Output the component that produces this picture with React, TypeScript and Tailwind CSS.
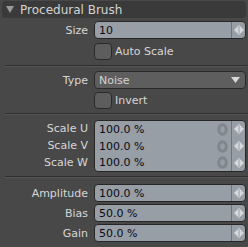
import React from 'react';

const Arrows = () => (
    <svg width="12" height="10" viewBox="0 0 12 10" className="block">
        <path d="M5 1L1 5L5 9Z" fill="#d6d9dc" />
        <rect x="5.5" y="0" width="1" height="10" fill="#d6d9dc" />
        <path d="M7 1L11 5L7 9Z" fill="#d6d9dc" />
    </svg>
);

const Ghost = () => (
    <svg width="11" height="13" viewBox="0 0 11 13" className="block">
        <ellipse cx="5.5" cy="6.5" rx="3.7" ry="4.8" fill="none" stroke="#80868c" strokeWidth="3" />
    </svg>
);

function Label({ text }: { text: string }) {
    return <div className="w-[89px] shrink-0 text-right pr-[1px] text-[#d7d7d7]">{text}</div>;
}

function NumField({ value }: { value: string }) {
    return (
        <div className="ml-[5px] w-[152px] h-[18px] flex items-stretch rounded-[4px] border border-[#262626] bg-[#979ea5]">
            <div className="flex-1 flex items-center pl-[4px] text-[#0b0b14]">{value}</div>
            <div className="w-[14px] flex items-center justify-center border-l border-[#6f757b]">
                <Arrows />
            </div>
        </div>
    );
}

function Check({ text }: { text: string }) {
    return (
        <div className="flex items-center">
            <div className="w-[89px] shrink-0" />
            <div className="ml-[5px] w-[18px] h-[17px] rounded-[4px] border border-[#2a2a2a] bg-[#5d5d5d]" />
            <span className="ml-[3px] text-[#d7d7d7]">{text}</span>
        </div>
    );
}

const Sep = () => <div className="ml-[5px] h-[2px] border-t border-[#2f2f2f] border-b-[#555555] border-b" />;

export default function App() {
    return (
        <div className="w-[248px] h-[247px] overflow-hidden bg-[#484848] font-['DejaVu_Sans',sans-serif] text-[11px] leading-none pt-[1px]">
            <div className="mx-[2px] h-[17px] rounded-[4px] bg-[#3a3a3a] flex items-center pl-[4px] text-[#d4d4d4] text-[12px]">
                <svg width="8" height="7" viewBox="0 0 8 7" className="block">
                    <path d="M0 0H8L4 7Z" fill="#9a9a9a" />
                </svg>
                <span className="ml-[6px]">Procedural Brush</span>
            </div>

            <div className="mt-[3px] flex items-center">
                <Label text="Size" />
                <NumField value="10" />
            </div>
            <div className="mt-[4px]">
                <Check text="Auto Scale" />
            </div>
            <div className="mt-[5px]"><Sep /></div>

            <div className="mt-[4px] flex items-center">
                <Label text="Type" />
                <div className="ml-[5px] w-[152px] h-[18px] flex items-center rounded-[4px] border border-[#2a2a2a] bg-[#5e5e5e] pl-[4px] pr-[5px] text-[#d4d4d4]">
                    <span className="flex-1">Noise</span>
                    <svg width="9" height="6" viewBox="0 0 9 6" className="block">
                        <path d="M0 0H9L4.5 6Z" fill="#d8d8d8" />
                    </svg>
                </div>
            </div>
            <div className="mt-[3px]">
                <Check text="Invert" />
            </div>
            <div className="mt-[4px]"><Sep /></div>

            <div className="mt-[5px] flex">
                <div className="flex flex-col">
                    {['Scale U', 'Scale V', 'Scale W'].map((t) => (
                        <div key={t} className="h-[17px] flex items-center">
                            <Label text={t} />
                        </div>
                    ))}
                </div>
                <div className="ml-[5px] w-[152px] h-[52px] rounded-[4px] border border-[#262626] bg-[#979ea5] flex">
                    <div className="flex-1 flex flex-col">
                        {['100.0 %', '100.0 %', '100.0 %'].map((v, i) => (
                            <div key={i} className="h-[17px] flex items-center pl-[4px] pr-[3px] text-[#0b0b14]">
                                <span className="flex-1">{v}</span>
                                <Ghost />
                            </div>
                        ))}
                    </div>
                    <div className="w-[14px] flex flex-col border-l border-[#6f757b]">
                        {[0, 1, 2].map((i) => (
                            <div key={i} className="h-[17px] flex items-center justify-center">
                                <Arrows />
                            </div>
                        ))}
                    </div>
                </div>
            </div>
            <div className="mt-[4px]"><Sep /></div>

            <div className="mt-[6px] flex flex-col gap-[2px]">
                {[
                    ['Amplitude', '100.0 %'],
                    ['Bias', '50.0 %'],
                    ['Gain', '50.0 %'],
                ].map(([l, v]) => (
                    <div key={l} className="flex items-center">
                        <Label text={l} />
                        <NumField value={v} />
                    </div>
                ))}
            </div>
        </div>
    );
}
